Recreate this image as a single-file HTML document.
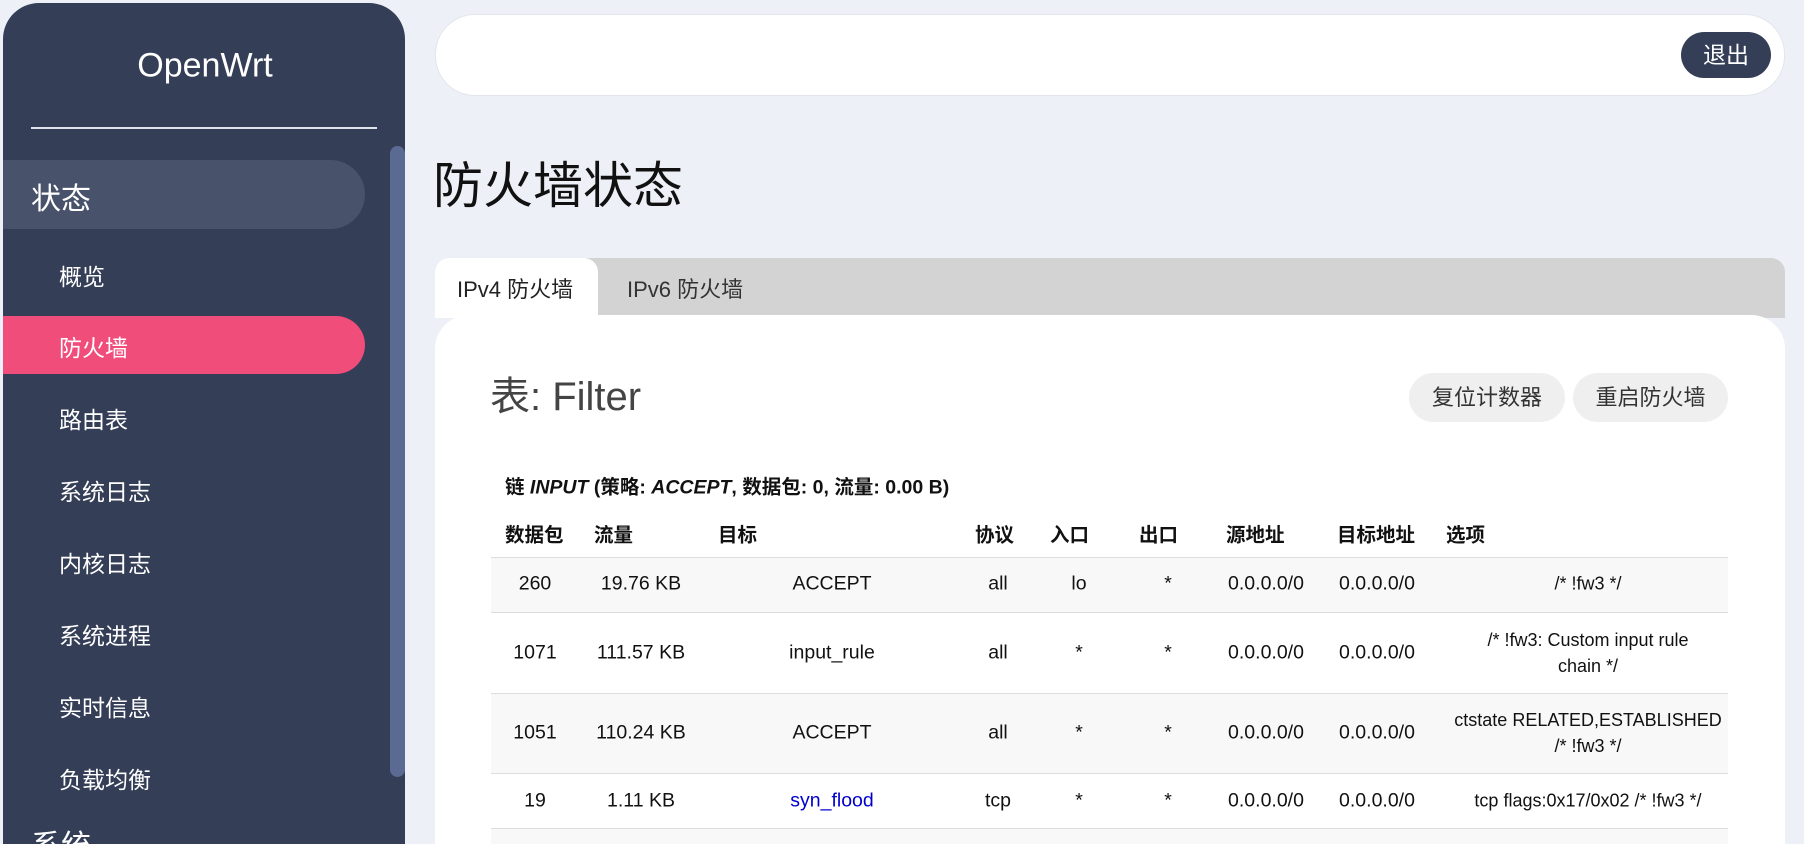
<!DOCTYPE html>
<html style="width:1804px;height:844px;overflow:hidden"><head><meta charset="utf-8"><style>
*{margin:0;padding:0;box-sizing:border-box}
body{width:1804px;height:844px;overflow:hidden;background:#edf1f7;font-family:"Liberation Sans","Noto Sans CJK SC",sans-serif;position:relative;color:#111}
.a{position:absolute;white-space:nowrap}
.side{left:3px;top:3px;width:402px;height:841px;background:#343e57;border-radius:36px 36px 0 0}
.mi{left:59px;color:#fff;font-size:23px;transform:translateY(-50%)}
.c{transform:translate(-50%,-50%);text-align:center;font-size:19.5px}
.h{transform:translateY(-50%);font-size:19.5px;font-weight:bold}
</style></head><body>
<div class="a side"></div>
<div class="a" style="left:205px;top:66px;transform:translate(-50%,-50%);color:#fff;font-size:34px">OpenWrt</div>
<div class="a" style="left:31px;top:127px;width:346px;height:2px;background:#dfe3ea"></div>
<div class="a" style="left:3px;top:160px;width:362px;height:69px;background:#48526a;border-radius:0 35px 35px 0"></div>
<div class="a" style="left:31px;top:196px;transform:translateY(-50%);color:#fff;font-size:30px">状态</div>
<div class="a" style="left:3px;top:316px;width:362px;height:58px;background:#f04d7b;border-radius:0 30px 30px 0"></div>
<div class="a mi" style="top:275px">概览</div>
<div class="a mi" style="top:346px">防火墙</div>
<div class="a mi" style="top:418px">路由表</div>
<div class="a mi" style="top:490px">系统日志</div>
<div class="a mi" style="top:562px">内核日志</div>
<div class="a mi" style="top:634px">系统进程</div>
<div class="a mi" style="top:706px">实时信息</div>
<div class="a mi" style="top:778px">负载均衡</div>
<div class="a" style="left:31px;top:832px;color:#fff;font-size:30px;line-height:30px">系统</div>
<div class="a" style="left:390px;top:146px;width:15px;height:631px;background:#5a6a92;border-radius:8px"></div>

<div class="a" style="left:435px;top:14px;width:1350px;height:82px;background:#fff;border-radius:40px;border:1px solid #e2e6ec"></div>
<div class="a" style="left:1681px;top:32px;width:90px;height:46px;background:#343e57;border-radius:23px;color:#fff;font-size:23px;line-height:46px;text-align:center">退出</div>

<div class="a" style="left:433px;top:182px;transform:translateY(-50%);font-size:50px;color:#111">防火墙状态</div>

<div class="a" style="left:435px;top:258px;width:1350px;height:60px;background:#d3d3d3;border-radius:14px 14px 0 0"></div>
<div class="a" style="left:435px;top:258px;width:163px;height:60px;background:#fff;border-radius:14px 14px 0 0"></div>
<div class="a" style="left:457px;top:288px;transform:translateY(-50%);font-size:22px;color:#222">IPv4 防火墙</div>
<div class="a" style="left:627px;top:288px;transform:translateY(-50%);font-size:22px;color:#333">IPv6 防火墙</div>
<div class="a" style="left:435px;top:315px;width:1350px;height:529px;background:#fff;border-radius:34px 34px 0 0"></div>

<div class="a" style="left:490px;top:393px;transform:translateY(-50%);font-size:40px;color:#444">表: Filter</div>
<div class="a" style="left:1409px;top:373px;width:156px;height:49px;background:#efefef;border-radius:25px;font-size:22px;line-height:49px;text-align:center;color:#333">复位计数器</div>
<div class="a" style="left:1573px;top:373px;width:155px;height:49px;background:#efefef;border-radius:25px;font-size:22px;line-height:49px;text-align:center;color:#333">重启防火墙</div>

<div class="a h" style="left:505px;top:485px">链 <i>INPUT</i> (策略: <i>ACCEPT</i>, 数据包: 0, 流量: 0.00 B)</div>

<div class="a h" style="left:505px;top:533px">数据包</div>
<div class="a h" style="left:594px;top:533px">流量</div>
<div class="a h" style="left:718px;top:533px">目标</div>
<div class="a h" style="left:975px;top:533px">协议</div>
<div class="a h" style="left:1050px;top:533px">入口</div>
<div class="a h" style="left:1139px;top:533px">出口</div>
<div class="a h" style="left:1226px;top:533px">源地址</div>
<div class="a h" style="left:1337px;top:533px">目标地址</div>
<div class="a h" style="left:1446px;top:533px">选项</div>

<div class="a" style="left:491px;top:557px;width:1237px;height:55px;background:#f8f8f8;border-top:1px solid #ddd"></div>
<div class="a" style="left:491px;top:612px;width:1237px;height:81px;background:#fff;border-top:1px solid #ddd"></div>
<div class="a" style="left:491px;top:693px;width:1237px;height:80px;background:#f8f8f8;border-top:1px solid #ddd"></div>
<div class="a" style="left:491px;top:773px;width:1237px;height:55px;background:#fff;border-top:1px solid #ddd"></div>
<div class="a" style="left:491px;top:828px;width:1237px;height:16px;background:#f8f8f8;border-top:1px solid #ddd"></div>

<div class="a c" style="left:535px;top:584px">260</div>
<div class="a c" style="left:641px;top:584px">19.76 KB</div>
<div class="a c" style="left:832px;top:584px">ACCEPT</div>
<div class="a c" style="left:998px;top:584px">all</div>
<div class="a c" style="left:1079px;top:584px">lo</div>
<div class="a c" style="left:1168px;top:584px">*</div>
<div class="a c" style="left:1266px;top:584px">0.0.0.0/0</div>
<div class="a c" style="left:1377px;top:584px">0.0.0.0/0</div>
<div class="a c" style="left:1588px;top:584px;font-size:18px">/* !fw3 */</div>

<div class="a c" style="left:535px;top:653px">1071</div>
<div class="a c" style="left:641px;top:653px">111.57 KB</div>
<div class="a c" style="left:832px;top:653px">input_rule</div>
<div class="a c" style="left:998px;top:653px">all</div>
<div class="a c" style="left:1079px;top:653px">*</div>
<div class="a c" style="left:1168px;top:653px">*</div>
<div class="a c" style="left:1266px;top:653px">0.0.0.0/0</div>
<div class="a c" style="left:1377px;top:653px">0.0.0.0/0</div>
<div class="a c" style="left:1588px;top:653px;font-size:18px;line-height:26px">/* !fw3: Custom input rule<br>chain */</div>

<div class="a c" style="left:535px;top:733px">1051</div>
<div class="a c" style="left:641px;top:733px">110.24 KB</div>
<div class="a c" style="left:832px;top:733px">ACCEPT</div>
<div class="a c" style="left:998px;top:733px">all</div>
<div class="a c" style="left:1079px;top:733px">*</div>
<div class="a c" style="left:1168px;top:733px">*</div>
<div class="a c" style="left:1266px;top:733px">0.0.0.0/0</div>
<div class="a c" style="left:1377px;top:733px">0.0.0.0/0</div>
<div class="a c" style="left:1588px;top:733px;font-size:18px;line-height:26px">ctstate RELATED,ESTABLISHED<br>/* !fw3 */</div>

<div class="a c" style="left:535px;top:801px">19</div>
<div class="a c" style="left:641px;top:801px">1.11 KB</div>
<div class="a c" style="left:832px;top:801px;color:#0000cc">syn_flood</div>
<div class="a c" style="left:998px;top:801px">tcp</div>
<div class="a c" style="left:1079px;top:801px">*</div>
<div class="a c" style="left:1168px;top:801px">*</div>
<div class="a c" style="left:1266px;top:801px">0.0.0.0/0</div>
<div class="a c" style="left:1377px;top:801px">0.0.0.0/0</div>
<div class="a c" style="left:1588px;top:801px;font-size:18px">tcp flags:0x17/0x02 /* !fw3 */</div>
</body></html>
